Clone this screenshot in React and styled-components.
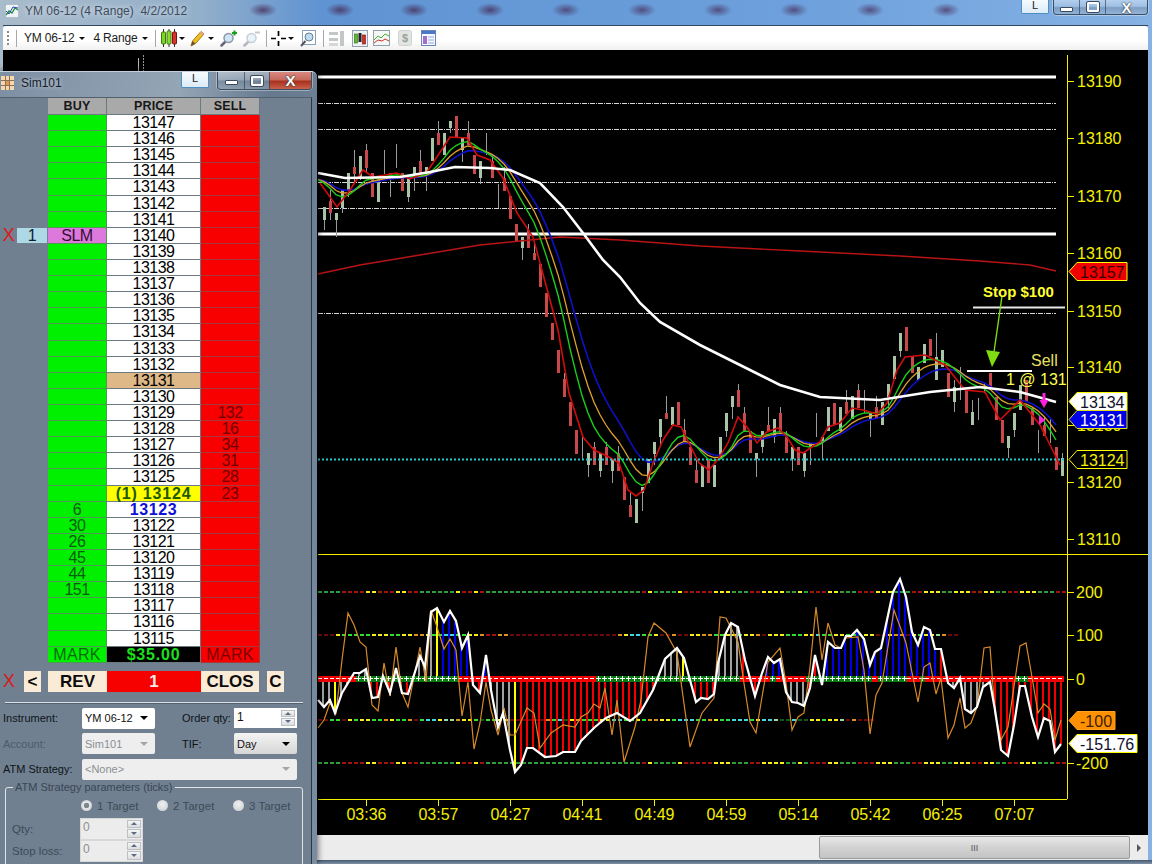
import React from "react";
import styled, { createGlobalStyle } from "styled-components";

const GlobalStyle = createGlobalStyle`
  html, body { margin: 0; padding: 0; background: #000; }
  body { font-family: "Liberation Sans", Arial, sans-serif; overflow: hidden; }
`;

/* ---------- chart data ---------- */
const pts = (s) => s.trim().split(/\s+/).map((p) => p.split(",").map(Number));
const toLine = (a) => a.map((p) => p.join(",")).join(" ");
const interp = (a, x) => {
  if (x <= a[0][0]) return a[0][1];
  for (let i = 1; i < a.length; i++) {
    if (x <= a[i][0]) {
      const t = (x - a[i - 1][0]) / (a[i][0] - a[i - 1][0]);
      return a[i - 1][1] + t * (a[i][1] - a[i - 1][1]);
    }
  }
  return a[a.length - 1][1];
};

const fastMa = pts(`320,183 337,207 350,190 363,170 373,177 397,173 410,179 427,172 450,137 467,138 477,155 490,160
  503,178 517,213 533,237 550,300 558,330 569,393 583,437 594,450 609,457 619,463 628,490 636,496 644,490 653,463 663,440
  673,425 681,427 689,443 699,463 709,470 719,458 728,443 738,417 747,427 757,443 767,432 778,428 787,437 795,450 803,453
  812,447 820,442 828,427 840,423 852,408 863,410 877,414 887,403 897,370 905,357 925,355 945,365 965,390 985,392 1000,420
  1020,400 1040,425 1060,465`);
const whiteMa = pts(`318,173 345,178 400,177 430,172 455,167 490,168 510,170 540,183 563,207 583,233 603,260 620,277 640,303
  660,322 700,345 740,365 780,385 820,397 880,400 930,392 980,387 1020,392 1056,402`);
const longMa = pts(`318,274 360,265 420,255 480,245 530,240 560,237 620,240 700,246 800,251 900,256 980,261 1030,265 1056,271`);

const ema = (alpha) => {
  const out = [];
  let v = 178;
  for (let x = 318; x <= 1056; x += 6) {
    v = v + alpha * (interp(fastMa, x) - v);
    out.push([x, Math.round(v * 10) / 10]);
  }
  return out;
};

const whiteOsc = pts(`318,700 324,707 330,700 335,713 342,693 354,673 360,673 366,669 372,698 378,697 383,676 390,693 396,668
  402,693 408,694 420,656 425,667 431,612 437,608 444,622 450,611 456,621 462,648 468,635 473,685 480,693 486,655 491,690
  498,727 503,713 510,750 515,772 521,765 527,748 533,748 545,757 556,756 563,752 575,752 581,741 595,727 606,718 617,713
  630,721 640,713 653,690 665,659 677,648 684,658 696,702 701,698 708,699 714,694 718,663 725,635 731,623 738,627 745,660
  755,696 762,673 768,657 774,663 780,659 786,692 792,702 798,703 804,706 810,688 815,655 822,685 828,642 835,648 841,648
  846,636 851,636 857,630 864,639 870,665 875,652 881,648 893,592 900,579 906,597 912,632 918,645 924,627 930,630 935,649
  941,649 948,683 954,688 960,678 965,709 971,713 977,707 983,687 990,682 995,710 1001,750 1008,756 1014,725 1020,686
  1025,686 1032,717 1038,737 1044,718 1050,721 1055,752 1061,744`);
const orangeOsc = pts(`318,728 324,720 330,703 336,713 342,660 348,613 354,625 360,642 366,647 372,705 378,711 384,663 390,696
  396,647 402,693 408,707 420,647 426,682 431,610 437,627 444,649 450,639 456,650 462,716 468,682 474,749 480,723 486,682
  491,710 498,735 504,708 510,735 515,735 527,708 534,713 540,748 551,733 563,725 575,727 581,717 588,713 594,704 600,708
  605,688 612,735 617,700 624,762 635,727 641,700 648,637 654,623 666,633 677,653 690,747 702,713 714,698 720,617 726,618
  731,628 738,642 743,677 750,722 756,733 762,697 768,662 780,648 786,683 792,730 798,717 804,713 810,667 816,607 822,660
  828,623 835,645 841,648 846,638 858,637 864,670 870,734 876,695 882,683 894,610 906,643 918,702 924,667 930,663 936,694
  941,678 948,738 954,725 960,698 965,728 971,723 977,707 984,648 990,647 995,713 1001,740 1008,727 1020,646 1026,643
  1032,677 1038,713 1044,704 1050,709 1055,740 1061,720`);

// x, body top, body bottom, colour, wick top, wick bottom (read off the candles)
const candles = [
  [324, 207, 220, "g", 207, 230], [330, 201, 213, "r", 190, 220], [336, 213, 220, "g", 213, 237], [342, 190, 208, "g", 190, 213],
  [348, 173, 190, "g", 173, 197], [354, 167, 174, "r", 150, 183], [360, 156, 177, "g", 156, 180], [366, 150, 168, "r", 144, 173],
  [372, 173, 197, "r", 173, 197], [378, 180, 202, "g", 180, 202], [384, 172, 174, "w", 150, 174], [390, 173, 178, "r", 173, 197],
  [396, 166, 168, "w", 144, 168], [402, 173, 191, "r", 173, 191], [408, 178, 197, "g", 178, 202], [414, 167, 174, "g", 167, 191],
  [420, 161, 174, "r", 150, 174], [426, 167, 174, "g", 167, 191], [432, 138, 161, "g", 138, 161], [438, 133, 145, "r", 121, 145],
  [444, 133, 155, "g", 133, 155], [450, 121, 128, "g", 121, 133], [456, 116, 138, "r", 116, 138], [462, 138, 150, "g", 138, 162],
  [468, 133, 145, "r", 121, 145], [474, 155, 174, "r", 155, 174], [480, 161, 178, "g", 161, 184], [486, 154, 155, "w", 133, 155],
  [492, 161, 178, "r", 155, 178], [498, 184, 185, "w", 184, 208], [504, 178, 191, "r", 167, 191], [510, 196, 219, "r", 196, 219],
  [516, 224, 242, "r", 224, 242], [522, 237, 248, "g", 237, 260], [528, 230, 248, "r", 224, 248], [534, 253, 260, "r", 242, 260],
  [540, 264, 287, "r", 264, 287], [546, 293, 317, "r", 293, 317], [552, 323, 340, "r", 323, 340],
  [558, 350, 373, "r", 350, 373], [564, 379, 397, "r", 373, 397], [570, 402, 426, "r", 402, 426], [576, 430, 454, "r", 430, 454],
  [582, 458, 459, "w", 436, 459], [588, 453, 465, "g", 453, 477], [594, 447, 465, "r", 442, 465], [600, 453, 471, "g", 453, 477],
  [606, 447, 465, "r", 442, 465], [612, 459, 471, "g", 459, 483], [618, 453, 471, "r", 446, 471], [624, 477, 500, "r", 477, 500],
  [630, 505, 517, "r", 493, 517], [636, 499, 523, "g", 499, 523], [642, 487, 493, "g", 487, 511], [648, 459, 483, "g", 459, 483],
  [654, 442, 454, "g", 442, 465], [660, 419, 437, "g", 419, 445], [666, 413, 419, "r", 396, 419], [672, 407, 425, "g", 407, 425],
  [678, 402, 425, "r", 402, 425], [684, 430, 442, "r", 419, 442], [690, 447, 465, "r", 447, 465], [696, 470, 483, "r", 460, 483],
  [702, 465, 487, "g", 465, 487], [708, 460, 483, "r", 460, 483], [714, 465, 487, "g", 465, 487], [720, 437, 459, "g", 437, 459],
  [726, 413, 431, "g", 413, 437], [732, 396, 407, "g", 396, 419], [738, 390, 407, "r", 384, 407], [744, 413, 431, "r", 407, 431],
  [750, 431, 453, "r", 431, 453], [756, 453, 459, "g", 453, 477], [762, 431, 447, "g", 431, 453], [768, 425, 431, "r", 407, 431],
  [774, 419, 437, "g", 419, 443], [780, 413, 431, "r", 407, 431], [786, 437, 453, "r", 431, 453], [792, 447, 459, "g", 447, 471],
  [798, 447, 465, "r", 447, 465], [804, 453, 471, "g", 453, 477], [810, 443, 447, "g", 443, 465], [816, 436, 437, "w", 413, 437],
  [822, 437, 443, "g", 437, 459], [828, 407, 431, "g", 407, 431], [834, 403, 425, "r", 403, 425], [840, 407, 431, "g", 407, 431],
  [846, 402, 414, "r", 390, 414], [852, 396, 419, "g", 396, 419], [858, 390, 408, "r", 384, 408], [864, 412, 413, "w", 390, 413],
  [870, 413, 419, "g", 413, 437], [876, 407, 419, "r", 396, 419], [882, 402, 425, "g", 402, 425], [888, 384, 397, "g", 384, 408],
  [894, 356, 379, "g", 356, 379],
  [900, 333, 351, "g", 333, 357], [906, 327, 351, "r", 327, 351], [912, 356, 373, "r", 356, 373], [918, 367, 380, "g", 367, 380],
  [924, 344, 363, "g", 344, 363], [930, 339, 356, "r", 339, 356], [936, 357, 380, "g", 333, 380], [942, 350, 367, "g", 350, 367],
  [948, 373, 397, "r", 373, 397], [954, 387, 402, "g", 380, 412], [960, 392, 393, "w", 367, 400], [966, 390, 413, "r", 390, 413],
  [972, 412, 425, "g", 400, 425], [978, 398, 399, "w", 398, 420], [984, 383, 384, "w", 383, 393], [990, 373, 388, "r", 373, 388],
  [996, 397, 420, "r", 397, 420], [1002, 420, 443, "r", 420, 443], [1008, 436, 448, "g", 436, 458], [1014, 413, 430, "g", 413, 437],
  [1020, 385, 410, "g", 385, 410], [1026, 380, 402, "r", 380, 402], [1032, 408, 425, "r", 408, 425], [1038, 430, 431, "w", 430, 453],
  [1044, 425, 436, "r", 417, 436], [1050, 418, 419, "w", 418, 443], [1056, 447, 470, "r", 447, 470], [1062, 458, 476, "g", 453, 476],
];
const candleColor = { r: "#c8484c", g: "#a9c4a6", w: "#a8a8a8" };

const inRange = (ranges, x) => ranges.some(([a, b]) => x >= a && x <= b);
const barColor = (x) => {
  if (inRange([[334, 336], [436, 438], [514, 516], [683, 685], [744, 746]], x)) return "#ffff00";
  if (inRange([[442, 470], [484, 488], [760, 782], [826, 940]], x)) return "#0000e0";
  if (inRange([[318, 331], [341, 367], [414, 431], [491, 510], [665, 678], [718, 739], [786, 805], [948, 991]], x)) return "#a0a0a0";
  return "#f00000";
};
const bars = [];
for (let x = 323; x <= 1061; x += 6) bars.push(x);

const greenBand = [[356, 458], [596, 740], [770, 776], [806, 872], [878, 907], [920, 925], [1016, 1028]];
const redBand = [[318, 356], [458, 596], [740, 770], [776, 806], [872, 878], [907, 920], [925, 1016], [1028, 1064]];
const crossXs = [];
for (let x = 358; x < 1064; x += 6) if (inRange(greenBand, x)) crossXs.push(x);

const dashColors = { g: "#2e9e3a", l: "#33dd33", r: "#a31212", R: "#6b0a0a", y: "#f4f020", o: "#e0901e", c: "#40d8e0", k: "#0f5a1a", m: "#9ad8a0" };
const expand = (s) => [...s.matchAll(/([a-zA-Z])(\d+)/g)].flatMap((m) => Array(+m[2]).fill(m[1]));
const outer = expand("g4r4y2r3y2r2g6y1r2y1r1g26r1y1g4y1r5y3g3r2y4g2y1g1r3y2g3r3y3g3r2y3g2y3r2y2g2r2y3g3r3y3g3r2y4g2");
const upper = expand("R3y1l5y3l2y2o2y1l2c2l2y2o1r2o2R18o1y1c2l2y1R2o1R2y2o2l2y2l1y2o1R1y3l3y2c1l2y2l2k1y2R2y1o2R1y1l1y2m1o1R2");
const lower = expand("R2l2R1y1l1y2l2o1y1l2o1R1l1c2y1m2o1y2l1k1l2y2R6o1l1c1k1y1o1l3y2c2l2y1l1o2y2l1c3l2o1y1l2c3l1y1c2m1k2c1k2y2l1y2m1R1o1R3");
const DashRow = ({ y, colors }) =>
  colors.map((c, i) => {
    const x = 318 + i * 6;
    return x < 1064 ? <line key={i} x1={x} x2={x + 4} y1={y} y2={y} stroke={dashColors[c]} strokeWidth="2" /> : null;
  });

const axisPrices = [[13190, 81.5], [13180, 138.5], [13170, 196.5], [13160, 253.5], [13150, 311.5], [13140, 367.5], [13130, 425.5], [13120, 482.5], [13110, 539.5]];
const axisOsc = [["200", 592.5], ["100", 635.5], ["0", 679.5], ["-200", 763.5]];
const times = [["03:36", 366.5], ["03:57", 438.5], ["04:27", 510.5], ["04:41", 582.5], ["04:49", 654.5], ["04:59", 726.5], ["05:14", 798.5], ["05:42", 870.5], ["06:25", 942.5], ["07:07", 1014.5]];
const AXIS = "#f4f000";

/* ---------- chart ---------- */
const ChartSvg = styled.svg`
  display: block;
  flex: 1;
  min-height: 0;
  width: 100%;
  background: #000;
  text {
    font-family: "Liberation Sans", Arial, sans-serif;
    font-size: 16px;
  }
`;

const Flag = ({ y, right, fill, stroke = "#ffff00", color, label }) => (
  <g>
    <polygon points={`1069,${y} 1077,${y - 9} ${right},${y - 9} ${right},${y + 9} 1077,${y + 9}`} fill={fill} stroke={stroke} />
    <text x="1080" y={y + 6} fill={color}>{label}</text>
  </g>
);

function Chart() {
  return (
    <ChartSvg viewBox="3 50 1145 785" preserveAspectRatio="none">
      <defs>
        <clipPath id="priceClip"><rect x="318" y="50" width="749" height="504" /></clipPath>
      </defs>
      <line x1="138.500" x2="138.500" y1="58" y2="71" stroke="#bbb" />
      <line x1="143.500" x2="143.500" y1="55" y2="71" stroke="#999" strokeDasharray="2 1" />

      {/* price panel */}
      <line x1="318" x2="1056" y1="77" y2="77" stroke="#fff" strokeWidth="3" />
      <line x1="318" x2="1056" y1="234" y2="234" stroke="#fff" strokeWidth="3" />
      {[103.5, 129.5, 182.5, 208.5, 313.5].map((y) => (
        <line key={y} x1="318" x2="1056" y1={y} y2={y} stroke="#d8d8d8" strokeDasharray="5 1 1 1" />
      ))}
      {candles.map(([x, top, bot, c, wt, wb], i) => (
        <g key={i}>
          <line x1={x + 0.5} x2={x + 0.5} y1={wt} y2={wb} stroke="#9a9a9a" />
          {c !== "w" && <rect x={x - 1} y={top} width="3" height={bot - top} fill={candleColor[c]} />}
        </g>
      ))}
      <polyline points={toLine(longMa)} fill="none" stroke="#b81414" strokeWidth="1.4" />
      <polyline points={toLine(ema(0.18))} fill="none" stroke="#1010c8" strokeWidth="1.6" />
      <polyline points={toLine(ema(0.25))} fill="none" stroke="#e0a030" strokeWidth="1.3" />
      <polyline points={toLine(ema(0.37))} fill="none" stroke="#18d018" strokeWidth="1.4" />
      <polyline points={toLine(fastMa)} fill="none" stroke="#d00c0c" strokeWidth="1.6" />
      <polyline points={toLine(whiteMa)} fill="none" stroke="#fff" strokeWidth="2.6" />
      <line x1="318" x2="1064" y1="459.5" y2="459.5" stroke="#25c6cc" strokeWidth="2" strokeDasharray="2 2" />

      {/* stop annotation */}
      <line x1="973" x2="1065" y1="307.5" y2="307.5" stroke="#e8e8e8" strokeWidth="2" />
      <line x1="967" x2="1032" y1="371" y2="371" stroke="#fff" strokeWidth="2" />
      <line x1="1002" x2="994" y1="296" y2="352" stroke="#7fdc10" strokeWidth="1.4" />
      <polygon points="986,350 1000,352 992,367" fill="#7fdc10" />
      <text x="983" y="297" fill="#ffff30" fontWeight="700" style={{ fontSize: 15 }}>Stop $100</text>
      <g clipPath="url(#priceClip)">
        <text x="1031" y="366" fill="#e8e060">Sell</text>
        <text x="1006" y="385" fill="#ffff50">1 @ 13131</text>
      </g>
      <path d="M1042.5 393h3v7h3l-4.500 8-4.500-8h3z" fill="#ff20e0" />
      <path d="M1039 415l6 5-6 5z" fill="#ff20e0" />

      {/* price axis */}
      <line x1="318" x2="1152" y1="554.500" y2="554.500" stroke={AXIS} />
      <line x1="1067.500" x2="1067.500" y1="55" y2="799" stroke={AXIS} />
      <line x1="318" x2="1067" y1="799.500" y2="799.500" stroke={AXIS} />
      {axisPrices.map(([p, y]) => (
        <g key={p}>
          <line x1="1067" x2="1074" y1={y} y2={y} stroke={AXIS} />
          <text x="1077" y={y + 5.5} fill={AXIS}>{p}</text>
        </g>
      ))}
      <Flag y={271.500} right={1127} fill="#f00000" color="#3a0000" label="13157" />
      <Flag y={401.500} right={1127} fill="#fff" color="#10102a" label="13134" />
      <Flag y={419.500} right={1127} fill="#0000e8" stroke="#dfe020" color="#fff" label="13131" />
      <Flag y={459.500} right={1127} fill="#000" color={AXIS} label="13124" />

      {/* oscillator panel */}
      <DashRow y={592} colors={outer} />
      <DashRow y={635} colors={upper} />
      <DashRow y={720} colors={lower} />
      <DashRow y={763} colors={outer} />
      {bars.map((x) => {
        const y = interp(whiteOsc, x);
        return <line key={x} x1={x} x2={x} y1="679" y2={y} stroke={barColor(x)} strokeWidth="2" />;
      })}
      <rect x="318" y="676" width="746" height="6" fill="#f00000" />
      {greenBand.map(([a, b]) => (
        <rect key={a} x={a} y="676" width={b - a} height="6" fill="#0a7a12" />
      ))}
      {redBand.map(([a, b]) => (
        <line key={a} x1={a} x2={b} y1="678.500" y2="678.500" stroke="#fff" strokeDasharray="4 2" />
      ))}
      {crossXs.map((x) => (
        <path key={x} d={`M${x - 2} 678.500h5M${x + 0.5} 676v5`} stroke="#fff" strokeWidth="1" />
      ))}
      <polyline points={toLine(orangeOsc)} fill="none" stroke="#d88a28" strokeWidth="1.2" />
      <polyline points={toLine(whiteOsc)} fill="none" stroke="#fff" strokeWidth="2.200" strokeLinejoin="miter" />
      {axisOsc.map(([v, y]) => (
        <g key={v}>
          <line x1="1067" x2="1074" y1={y} y2={y} stroke={AXIS} />
          <text x="1076" y={y + 5.5} fill={AXIS}>{v}</text>
        </g>
      ))}
      <Flag y={720.500} right={1115} fill="#ff9000" stroke="#ffa020" color="#3a2000" label="-100" />
      <Flag y={743.500} right={1137} fill="#fff" color="#10102a" label="-151.76" />

      {/* time axis */}
      {times.map(([t, x]) => (
        <g key={t}>
          <line x1={x} x2={x} y1="799" y2="806" stroke={AXIS} />
          <text x={x} y="820" fill={AXIS} textAnchor="middle">{t}</text>
        </g>
      ))}
    </ChartSvg>
  );
}

/* ---------- outer window ---------- */
const Desktop = styled.div`
  position: relative;
  width: 1152px;
  height: 864px;
  overflow: hidden;
  display: flex;
  flex-direction: column;
  background-color: #5f93d2;
  background-image:
    radial-gradient(ellipse 14px 7px at 263px 10px, rgba(70, 45, 90, 0.8), transparent),
    radial-gradient(ellipse 14px 7px at 340px 10px, rgba(70, 45, 90, 0.8), transparent),
    radial-gradient(ellipse 14px 7px at 414px 10px, rgba(70, 45, 90, 0.8), transparent),
    radial-gradient(ellipse 14px 7px at 490px 10px, rgba(70, 45, 90, 0.8), transparent),
    radial-gradient(ellipse 14px 7px at 566px 10px, rgba(70, 45, 90, 0.7), transparent),
    radial-gradient(ellipse 14px 7px at 642px 10px, rgba(70, 45, 90, 0.7), transparent),
    radial-gradient(ellipse 14px 7px at 718px 10px, rgba(70, 45, 90, 0.7), transparent),
    radial-gradient(ellipse 14px 7px at 794px 10px, rgba(70, 45, 90, 0.7), transparent),
    radial-gradient(ellipse 14px 7px at 870px 10px, rgba(70, 45, 90, 0.7), transparent),
    radial-gradient(ellipse 14px 7px at 946px 10px, rgba(70, 45, 90, 0.7), transparent),
    linear-gradient(90deg, #a9bccb 0, #93afca 200px, #5f93d2 320px, #6da0dc 800px, #86b2e4 1152px);
`;
const TitleBar = styled.div`
  height: 25px;
  flex: none;
  display: flex;
  align-items: flex-start;
  padding: 0 4px 0 5px;
  box-sizing: border-box;
`;
const TitleIcon = styled.svg`
  margin-top: 4px;
  flex: none;
`;
const TitleText = styled.span`
  margin: 4px 0 0 6px;
  font-size: 12px;
  color: #3f4c5c;
  white-space: pre;
  text-shadow: 0 0 6px rgba(255, 255, 255, 0.9);
`;
const LinkButton = styled.div`
  margin-left: auto;
  width: 28px;
  height: ${(p) => p.$h}px;
  box-sizing: border-box;
  background: linear-gradient(#f6fbff, #dcebf6);
  border: 1px solid #4d8fc2;
  border-top: none;
  border-radius: 0 0 2px 2px;
  font-size: 11px;
  line-height: ${(p) => p.$h - 3}px;
  text-align: center;
  color: #222;
  flex: none;
`;
const Caption = styled.div`
  display: flex;
  margin-left: ${(p) => p.$gap}px;
  height: ${(p) => p.$h}px;
  border: 1px solid #3c4e62;
  border-top: none;
  border-radius: 0 0 4px 4px;
  box-shadow: 0 0 0 1px rgba(255, 255, 255, 0.35);
  overflow: hidden;
  flex: none;
`;
const CaptionBtn = styled.div`
  width: ${(p) => p.$w}px;
  display: flex;
  align-items: center;
  justify-content: center;
  border-left: ${(p) => (p.$first ? "none" : "1px solid rgba(40, 50, 70, 0.6)")};
  background: ${(p) =>
    p.$red
      ? "linear-gradient(#d98880 0, #c76a5e 45%, #a8321e 55%, #c8604c 100%)"
      : "linear-gradient(rgba(255,255,255,.4) 0, rgba(210,220,232,.35) 45%, rgba(120,135,155,.45) 55%, rgba(170,185,200,.4) 100%)"};
`;
const MinGlyph = styled.div`
  width: 11px;
  height: 3px;
  margin-top: 4px;
  background: #fff;
  border: 1px solid #3c4a5c;
  border-radius: 1px;
`;
const MaxGlyph = styled.div`
  width: 8px;
  height: 6px;
  border: 2px solid #fff;
  outline: 1px solid #3c4a5c;
  border-radius: 1px;
`;
const CloseGlyph = styled.span`
  font: 700 15px/1 "Liberation Sans", sans-serif;
  color: #fff;
  text-shadow: 0 0 1px #333, 0 0 2px #333;
`;

const ChartFrame = styled.div`
  flex: 1;
  min-height: 0;
  display: flex;
  flex-direction: column;
  margin: 0 4px 0 3px;
  border-top: 1px solid #33475e;
`;
const Toolbar = styled.div`
  height: 24px;
  flex: none;
  display: flex;
  align-items: center;
  padding-left: 4px;
  border-radius: 3px 3px 0 0;
  background: linear-gradient(#ffffff 60%, #f0f0f0);
  font-size: 12px;
  color: #1c1c1c;
`;
const Grip = styled.div`
  width: 2px;
  height: 15px;
  margin-right: 7px;
  background: repeating-linear-gradient(#8a8a8a 0 2px, transparent 2px 4px);
`;
const TbSep = styled.div`
  width: 1px;
  height: 17px;
  background: #a8a8a8;
  margin: 0 ${(p) => p.$r ?? 5}px 0 ${(p) => p.$l ?? 6}px;
`;
const TbLabel = styled.span`
  margin-right: 5px;
  white-space: nowrap;
  letter-spacing: -0.2px;
`;
const TbCaret = styled.span`
  width: 0;
  height: 0;
  border: 3px solid transparent;
  border-top: 3px solid #111;
  border-bottom: none;
  margin: 1px ${(p) => p.$r ?? 8}px 0 0;
`;
const TbIcon = styled.svg`
  flex: none;
  margin-right: ${(p) => p.$r ?? 6}px;
`;

const ScrollRow = styled.div`
  height: 25px;
  flex: none;
  display: flex;
  align-items: stretch;
  background: #ececec;
`;
const ScrollThumb = styled.div`
  margin: 1px 0 1px 816px;
  width: 311px;
  box-sizing: border-box;
  border: 1px solid #9a9a9a;
  border-radius: 2px;
  background: linear-gradient(#e9e9e9, #d2d2d2 50%, #c4c4c4);
  display: flex;
  align-items: center;
  justify-content: center;
  font-size: 9px;
  color: #555;
`;
const ScrollArrow = styled.div`
  margin: 9px 0 0 7px;
  width: 0;
  height: 0;
  border: 4px solid transparent;
  border-left: 4px solid #555;
  border-right: none;
`;
const BottomEdge = styled.div`
  height: 4px;
  flex: none;
  background: linear-gradient(#46586c, #7e93aa);
`;

/* ---------- Sim101 order window ---------- */
const SimWindow = styled.div`
  position: absolute;
  left: 0;
  top: 71px;
  width: 317px;
  height: 793px;
  display: flex;
  flex-direction: column;
  border-radius: 0 6px 0 0;
  background: linear-gradient(100deg, #7d8fa3 0, #94a5b6 40%, #66798e 60%, #7b8da0 100%);
  box-shadow: 0 0 7px rgba(0, 0, 0, 0.7);
`;
const SimTitle = styled.div`
  height: 26px;
  flex: none;
  display: flex;
  align-items: flex-start;
  padding-right: 5px;
  box-sizing: border-box;
  border-top: 1px solid #c2cfdc;
  border-radius: 0 6px 0 0;
`;
const SimTitleText = styled.span`
  margin: 4px 0 0 7px;
  font-size: 12px;
  color: #15202c;
  text-shadow: 0 0 5px rgba(255, 255, 255, 0.7);
`;
const Client = styled.div`
  flex: 1;
  min-height: 0;
  overflow: hidden;
  margin-right: 5px;
  background: #708090;
  border-right: 1px solid #27384a;
  border-top: 1px solid #52606e;
`;
const LadderRow = styled.div`
  display: grid;
  grid-template-columns: 17px 31px 59px 94px 59px;
  height: ${(p) => p.$h || 16.12}px;
  font-size: 16px;
  letter-spacing: -0.5px;
  line-height: 15px;
  text-align: center;
  white-space: nowrap;
`;
const Side = styled.div`
  color: ${(p) => p.$color || "transparent"};
  background: ${(p) => p.$bg || "transparent"};
  margin: ${(p) => (p.$bg ? "0 1px 1px 0" : "0")};
  font-size: ${(p) => p.$fs || "inherit"};
`;
const Cell = styled.div`
  background: ${(p) => p.$bg};
  color: ${(p) => p.$color || "#000"};
  font-weight: ${(p) => (p.$bold ? 700 : 400)};
  letter-spacing: ${(p) => p.$ls || "inherit"};
  border-right: 1px solid ${(p) => p.$line || "#6b7a80"};
  border-bottom: 1px solid ${(p) => p.$line || "#6b7a80"};
`;
const HeadCell = styled(Cell)`
  background: #a9a9a9;
  color: #171717;
  font-size: 12.500px;
  font-weight: 700;
  letter-spacing: 0.2px;
  line-height: 16px;
`;
const ActionRow = styled.div`
  display: grid;
  grid-template-columns: 24px 17px 7px 59px 94px 58px 8px 17px;
  height: 21px;
  margin-top: 8px;
  font: 700 17px/21px "Liberation Sans", sans-serif;
  text-align: center;
`;
const XMark = styled.div`
  color: #d81a1a;
  font-weight: 400;
  text-align: left;
  padding-left: 3px;
  font-size: 18px;
`;
const ActionBtn = styled.div`
  grid-column: ${(p) => p.$col};
  background: ${(p) => p.$bg || "#faebd7"};
  color: ${(p) => p.$color || "#0c0c0c"};
`;
const Divider = styled.div`
  height: 1px;
  margin: 10px 8px 0 5px;
  background: #d9dfe5;
  box-shadow: 0 1px 0 #55626f;
`;
const FormGrid = styled.div`
  display: grid;
  grid-template-columns: 79px 73px 79px 63px;
  grid-template-rows: 21px 21px 21px;
  row-gap: 4.500px;
  padding: 5px 0 0 3px;
  font-size: 11px;
`;
const FieldLabel = styled.label`
  align-self: center;
  color: ${(p) => (p.$off ? "#4e5c6a" : "#0e1418")};
  padding-left: ${(p) => p.$pad || 0}px;
  white-space: nowrap;
`;
const SelectBox = styled.div`
  grid-column: ${(p) => p.$span || "auto"};
  display: flex;
  align-items: center;
  justify-content: space-between;
  padding: 0 7px 0 3px;
  border-radius: 2px;
  color: ${(p) => (p.$off ? "#8b8f93" : "#111")};
  background: ${(p) =>
    p.$off ? "#eeeeee" : p.$grad ? "linear-gradient(#f4f4f4, #d6d6d6)" : "#fff"};
`;
const SelectCaret = styled.span`
  width: 0;
  height: 0;
  border: 4px solid transparent;
  border-top: 4px solid ${(p) => (p.$off ? "#a5a5a5" : "#000")};
  border-bottom: none;
`;
const SpinBox = styled.div`
  display: flex;
  justify-content: space-between;
  width: 63px;
  height: ${(p) => p.$h || 20}px;
  padding-left: 2px;
  box-sizing: border-box;
  font-size: 12px;
  line-height: 16px;
  background: ${(p) => (p.$off ? "#ececec" : "#fff")};
  color: ${(p) => (p.$off ? "#8e8e8e" : "#111")};
  border: 1px solid ${(p) => (p.$off ? "#d8d8d8" : "#fff")};
`;
const SpinArrows = styled.div`
  width: 14px;
  display: flex;
  flex-direction: column;
  gap: 1px;
  margin: 1px;
`;
const SpinBtn = styled.div`
  flex: 1;
  display: flex;
  align-items: center;
  justify-content: center;
  background: linear-gradient(#f6f6f6, #dcdcdc);
  border: 1px solid #bcc0c6;
  &::after {
    content: "";
    border: 3px solid transparent;
    ${(p) => (p.$up ? "border-bottom: 3px solid #5a6a86; border-top: none;" : "border-top: 3px solid #5a6a86; border-bottom: none;")}
  }
`;
const GroupBox = styled.fieldset`
  margin: 1px 8px 0 5px;
  padding: 5px 0 0 6px;
  min-width: 0;
  height: 92px;
  box-sizing: border-box;
  border: 1px solid #dfe4e8;
  border-radius: 3px;
  font-size: 11.500px;
  color: #3e4a57;
`;
const GroupLegend = styled.legend`
  padding: 0 2px;
  margin-left: 1px;
  font-size: 11px;
  line-height: 13px;
  color: #3a4653;
`;
const TargetRow = styled.div`
  display: flex;
  align-items: center;
  height: 14px;
  margin-left: 69px;
`;
const Radio = styled.span`
  width: 11px;
  height: 11px;
  border-radius: 50%;
  flex: none;
  background: ${(p) =>
    p.$on
      ? "radial-gradient(circle, #7d8790 0 30%, #e9e9e9 40%, #b9bec4 100%)"
      : "radial-gradient(circle at 50% 40%, #f0f0f0, #c8ccd0)"};
  margin-right: 5px;
`;
const TargetText = styled.span`
  width: ${(p) => p.$w}px;
  flex: none;
`;
const ParamRow = styled.div`
  display: grid;
  grid-template-columns: 68px 63px;
  align-items: center;
  height: 22px;
  margin-top: ${(p) => p.$top || 0}px;
`;

const Spin = ({ value, off, h }) => (
  <SpinBox $off={off} $h={h}>
    {value}
    <SpinArrows>
      <SpinBtn $up />
      <SpinBtn />
    </SpinArrows>
  </SpinBox>
);

const buyQty = { 13123: 6, 13122: 30, 13121: 26, 13120: 45, 13119: 44, 13118: 151 };
const sellQty = { 13129: 132, 13128: 16, 13127: 34, 13126: 31, 13125: 28, 13124: 23 };
const prices = Array.from({ length: 33 }, (_, i) => 13147 - i);
const LIME = "#00f000";
const RED = "#f80000";
const LIME_LINE = "#4a9a50";
const RED_LINE = "#a83838";

function LadderLine({ price }) {
  const isSlm = price === 13140;
  let priceBg = "#fff";
  let priceColor = "#000";
  let bold = false;
  let spacing;
  let label = price;
  if (price === 13131) priceBg = "#deb887";
  if (price === 13124) {
    priceBg = "#ffff00";
    priceColor = "#1d5a00";
    bold = true;
    spacing = "0.8px";
    label = "(1) 13124";
  }
  if (price === 13123) {
    priceColor = "#1010d8";
    bold = true;
    spacing = "0.6px";
  }
  return (
    <LadderRow>
      <Side $color="#e01818" $fs="18px">{isSlm ? "X" : ""}</Side>
      <Side $bg={isSlm ? "#add8e6" : undefined} $color="#10202a">{isSlm ? "1" : ""}</Side>
      <Cell $bg={isSlm ? "#dd78dd" : LIME} $line={LIME_LINE} $color={isSlm ? "#301030" : "#085c10"}>{isSlm ? "SLM" : buyQty[price]}</Cell>
      <Cell $bg={priceBg} $color={priceColor} $bold={bold} $ls={spacing}>{label}</Cell>
      <Cell $bg={RED} $line={RED_LINE} $color="#6e0000">{sellQty[price]}</Cell>
    </LadderRow>
  );
}

const SmallCandles = () => (
  <TbIcon width="16" height="18" viewBox="0 0 16 18" $r={2}>
    <path d="M2.500 0v18M8 0v18M13.500 0v18" stroke="#333" />
    <rect x="0.500" y="3" width="4" height="12" rx="1" fill="#7fd321" stroke="#3d7a10" />
    <rect x="6" y="2" width="4" height="13" rx="1" fill="#8edc2a" stroke="#3d7a10" />
    <rect x="11.500" y="3" width="4" height="12" rx="1" fill="#d8342c" stroke="#7a1410" />
  </TbIcon>
);
const Pencil = () => (
  <TbIcon width="15" height="17" viewBox="0 0 15 17" $r={3}>
    <path d="M1 16l1.500-5L11 1.500l3 2.500L5.500 13.500z" fill="#f0c020" stroke="#a87a10" />
    <path d="M1 16l1.500-5 3 2.500z" fill="#6a5030" />
    <path d="M11 1.500l3 2.500-1.500 1.600-3-2.500z" fill="#e8a090" />
  </TbIcon>
);
const Magnifier = ({ mark, faded }) => (
  <TbIcon width="17" height="17" viewBox="0 0 17 17" opacity={faded ? 0.45 : 1}>
    <path d="M1.500 15.500l4.500-4.500" stroke="#667" strokeWidth="2.500" strokeLinecap="round" />
    <circle cx="8.500" cy="8" r="4.500" fill="#cfe5f5" stroke="#8a98a8" strokeWidth="1.500" />
    {mark === "plus" && <path d="M12 3h5M14.500 0.500v5" stroke="#1aa01a" strokeWidth="2" />}
    {mark === "minus" && <path d="M12 2.500h5" stroke="#888" strokeWidth="2" />}
  </TbIcon>
);
const Crosshair = () => (
  <TbIcon width="15" height="15" viewBox="0 0 15 15" $r={2}>
    <path d="M0 7.500h5M10 7.500h5M7.500 0v5M7.500 10v5" stroke="#000" strokeWidth="1.700" />
  </TbIcon>
);
const ZoomBox = () => (
  <TbIcon width="16" height="17" viewBox="0 0 16 17">
    <rect x="2.500" y="0.500" width="13" height="14" fill="#fff" stroke="#8aa0b8" />
    <circle cx="9" cy="7" r="4" fill="#bcdcf2" stroke="#6a7c90" />
    <path d="M1 16l4.500-5" stroke="#556" strokeWidth="2" />
  </TbIcon>
);
const FadedBars = () => (
  <TbIcon width="17" height="17" viewBox="0 0 17 17" $r={7}>
    <path d="M1 2h9v3H1zM1 8h9v3H1zM12 1h4v15h-4z" fill="#c4c8c4" />
    <path d="M1 13h9v3H1z" fill="#d6d8d6" />
  </TbIcon>
);
const BoxCandles = () => (
  <TbIcon width="16" height="17" viewBox="0 0 16 17" $r={5}>
    <rect x="0.500" y="0.500" width="15" height="16" fill="#eef2f4" stroke="#90a0ac" />
    <rect x="2.500" y="4" width="3" height="9" fill="#5cba2c" stroke="#2f6a10" strokeWidth=".6" />
    <rect x="6.500" y="3" width="3" height="9" fill="#222" />
    <rect x="10.500" y="5" width="3" height="9" fill="#d82c24" stroke="#701010" strokeWidth=".6" />
  </TbIcon>
);
const BoxLines = () => (
  <TbIcon width="17" height="16" viewBox="0 0 17 16" $r={8}>
    <rect x="0.500" y="0.500" width="16" height="15" fill="#f4f8f4" stroke="#90a0ac" />
    <path d="M1 10l4-4 3 2 4-4 4 2" fill="none" stroke="#49b030" />
    <path d="M1 13l4-3 4 1 3-2 4 2" fill="none" stroke="#d03030" />
  </TbIcon>
);
const DollarDoc = () => (
  <TbIcon width="14" height="16" viewBox="0 0 14 16" $r={9}>
    <rect x="0.500" y="0.500" width="13" height="15" rx="2" fill="#e2e6e2" stroke="#cfd3cf" />
    <text x="7" y="12" textAnchor="middle" fill="#9aa09a" fontSize="11" fontWeight="700" fontFamily="Liberation Sans">$</text>
  </TbIcon>
);
const Properties = () => (
  <TbIcon width="15" height="16" viewBox="0 0 15 16">
    <rect x="0.500" y="0.500" width="14" height="15" fill="#f6f8ff" stroke="#6a84b8" />
    <rect x="1" y="1" width="13" height="3" fill="#4a78c8" />
    <rect x="2" y="6" width="4" height="8" fill="#a070d0" />
    <path d="M7 7h6M7 10h6M7 13h6" stroke="#90a8d0" />
  </TbIcon>
);
const SimIconSvg = styled.svg`
  flex: none;
  margin: 4px 0 0 1px;
`;
const SimIcon = () => (
  <SimIconSvg width="13" height="14" viewBox="0 0 13 14">
    <rect width="13" height="14" fill="#f6d8b0" />
    <path d="M4.500 0v14M8.500 0v14M0 4.500h13M0 9.500h13" stroke="#8c7056" />
    <rect x="5" y="5" width="3" height="4" fill="#e89848" />
  </SimIconSvg>
);

export default function App() {
  return (
    <Desktop>
      <GlobalStyle />
      <TitleBar>
        <TitleIcon width="14" height="14" viewBox="0 0 14 14">
          <rect width="14" height="14" fill="#eef3f7" stroke="#7c8da0" />
          <path d="M1 11l3-4 3 2 3-5 3 2" fill="none" stroke="#2a8a40" strokeWidth="1.300" />
          <path d="M1 7l3 3 4-7 5 1" fill="none" stroke="#2a4ab0" />
        </TitleIcon>
        <TitleText>YM 06-12 (4 Range)  4/2/2012</TitleText>
        <LinkButton $h={14}>L</LinkButton>
        <Caption $gap={4} $h={14}>
          <CaptionBtn $first $w={25}><MinGlyph /></CaptionBtn>
          <CaptionBtn $w={25}><MaxGlyph /></CaptionBtn>
          <CaptionBtn $w={41}><CloseGlyph>X</CloseGlyph></CaptionBtn>
        </Caption>
      </TitleBar>
      <ChartFrame>
        <Toolbar>
          <Grip />
          <TbSep $l={0} $r={7} />
          <TbLabel>YM 06-12</TbLabel>
          <TbCaret />
          <TbLabel>4 Range</TbLabel>
          <TbCaret $r={5} />
          <TbSep $l={2} $r={5} />
          <SmallCandles />
          <TbCaret $r={5} />
          <Pencil />
          <TbCaret $r={6} />
          <Magnifier mark="plus" />
          <Magnifier mark="minus" faded />
          <TbSep $l={0} $r={4} />
          <Crosshair />
          <TbCaret $r={6} />
          <ZoomBox />
          <TbSep $l={1} $r={4} />
          <FadedBars />
          <BoxCandles />
          <BoxLines />
          <DollarDoc />
          <Properties />
        </Toolbar>
        <Chart />
        <ScrollRow>
          <ScrollThumb>III</ScrollThumb>
          <ScrollArrow />
        </ScrollRow>
      </ChartFrame>
      <BottomEdge />

      <SimWindow>
        <SimTitle>
          <SimIcon />
          <SimTitleText>Sim101</SimTitleText>
          <LinkButton $h={16}>L</LinkButton>
          <Caption $gap={8} $h={17}>
            <CaptionBtn $first $w={26}><MinGlyph /></CaptionBtn>
            <CaptionBtn $w={24}><MaxGlyph /></CaptionBtn>
            <CaptionBtn $w={41} $red><CloseGlyph>X</CloseGlyph></CaptionBtn>
          </Caption>
        </SimTitle>
        <Client>
          <LadderRow $h={17}>
            <Side />
            <Side />
            <HeadCell>BUY</HeadCell>
            <HeadCell>PRICE</HeadCell>
            <HeadCell>SELL</HeadCell>
          </LadderRow>
          {prices.map((p) => (
            <LadderLine key={p} price={p} />
          ))}
          <LadderRow $h={16}>
            <Side />
            <Side />
            <Cell $bg={LIME} $line={LIME_LINE} $color="#086a10" $ls="0.3px">MARK</Cell>
            <Cell $bg="#000" $color="#1ae01a" $bold $ls="0.8px">$35.00</Cell>
            <Cell $bg={RED} $line={RED_LINE} $color="#7a0000" $ls="0.3px">MARK</Cell>
          </LadderRow>
          <ActionRow>
            <XMark>X</XMark>
            <ActionBtn $col="2">&lt;</ActionBtn>
            <ActionBtn $col="4">REV</ActionBtn>
            <ActionBtn $col="5" $bg="#f60000" $color="#ffe8e8">1</ActionBtn>
            <ActionBtn $col="6">CLOS</ActionBtn>
            <ActionBtn $col="8">C</ActionBtn>
          </ActionRow>
          <Divider />
          <FormGrid>
            <FieldLabel>Instrument:</FieldLabel>
            <SelectBox>YM 06-12<SelectCaret /></SelectBox>
            <FieldLabel $pad={27}>Order qty:</FieldLabel>
            <Spin value="1" />
            <FieldLabel $off>Account:</FieldLabel>
            <SelectBox $off>Sim101<SelectCaret $off /></SelectBox>
            <FieldLabel $pad={27}>TIF:</FieldLabel>
            <SelectBox $grad>Day<SelectCaret /></SelectBox>
            <FieldLabel>ATM Strategy:</FieldLabel>
            <SelectBox $off $span="2 / span 3">&lt;None&gt;<SelectCaret $off /></SelectBox>
          </FormGrid>
          <GroupBox>
            <GroupLegend>ATM Strategy parameters (ticks)</GroupLegend>
            <TargetRow>
              <Radio $on />
              <TargetText $w={60}>1 Target</TargetText>
              <Radio />
              <TargetText $w={60}>2 Target</TargetText>
              <Radio />
              <TargetText $w={50}>3 Target</TargetText>
            </TargetRow>
            <ParamRow $top={5}>
              <span>Qty:</span>
              <Spin value="0" off h={22} />
            </ParamRow>
            <ParamRow>
              <span>Stop loss:</span>
              <Spin value="0" off h={22} />
            </ParamRow>
          </GroupBox>
        </Client>
      </SimWindow>
    </Desktop>
  );
}
